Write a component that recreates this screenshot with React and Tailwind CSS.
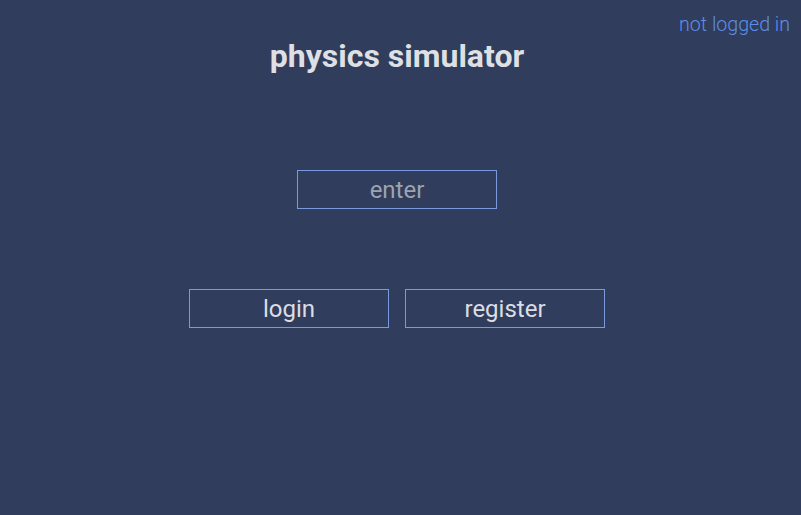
export default function App() {
  return (
    <div
      className="relative min-h-[515px] w-full bg-[#303d5c] flex flex-col items-center pr-[7px]"
      style={{ fontFamily: 'Roboto, "Noto Sans", sans-serif' }}
    >
      <span className="absolute right-[11px] top-[11px] text-[19.6px] font-light text-[#5e8fe8] leading-[28px]">
        not logged in
      </span>

      <h1 className="mt-[36px] text-[32px] font-bold text-[#dfe0e5] leading-[40px]">
        physics simulator
      </h1>

      <button className="mt-[94px] w-[200px] h-[39px] border border-[#7a9ade] text-[24px] text-[#9ea3ae] leading-none">
        enter
      </button>

      <div className="mt-[80px] flex gap-[16px]">
        <button className="w-[200px] h-[39px] border border-[#7a9ade] text-[24px] text-[#dcdde2] leading-none">
          login
        </button>
        <button className="w-[200px] h-[39px] border border-[#7a9ade] text-[24px] text-[#dcdde2] leading-none">
          register
        </button>
      </div>
    </div>
  )
}
